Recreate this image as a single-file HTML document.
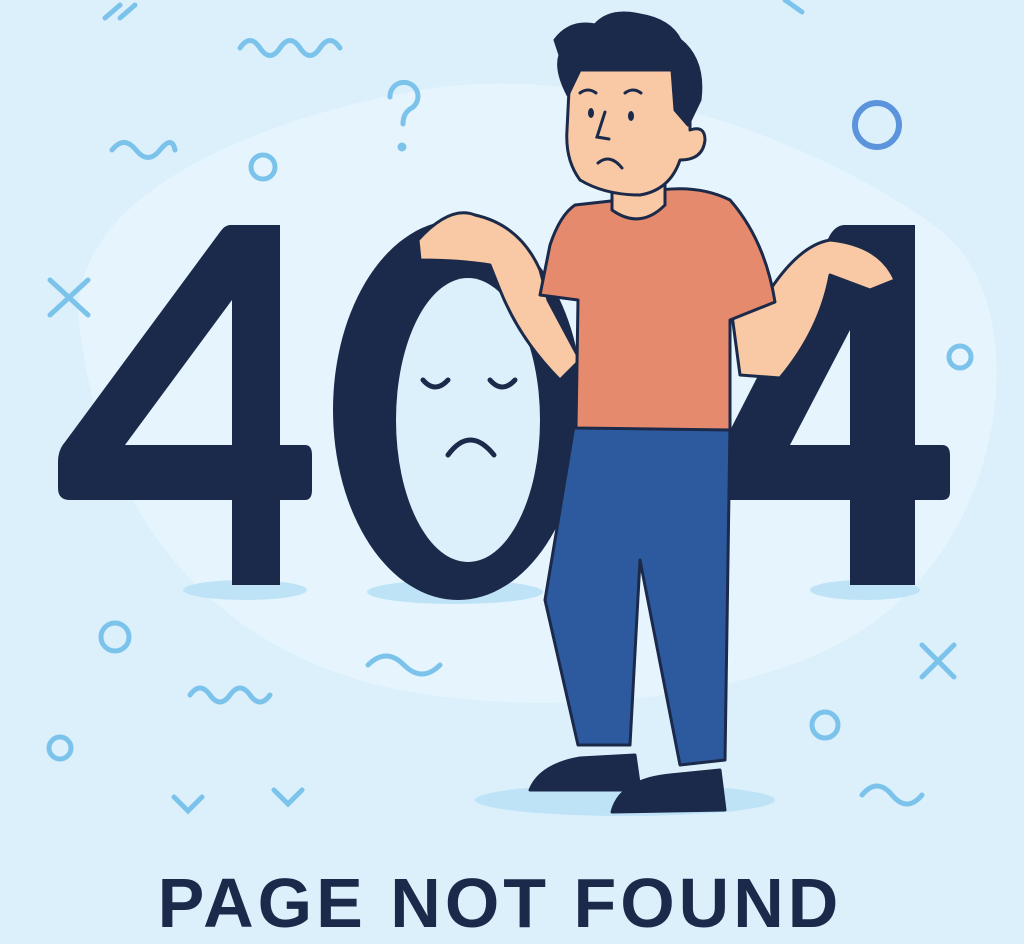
<!DOCTYPE html>
<html><head><meta charset="utf-8"><style>
html,body{margin:0;padding:0;width:1024px;height:944px;overflow:hidden;background:#dcf0fb}
svg{display:block}
</style></head><body>
<svg width="1024" height="944" viewBox="0 0 1024 944" xmlns="http://www.w3.org/2000/svg">
<rect width="1024" height="944" fill="#dcf0fb"/>
<path d="M80 330 C60 200 250 120 420 90 C600 60 820 140 940 230 C1030 300 1010 500 900 600 C800 700 560 720 400 690 C200 650 100 500 80 330Z" fill="#e6f5fd"/>
<g fill="#bfe3f6">
<ellipse cx="245" cy="590" rx="62" ry="10"/>
<ellipse cx="455" cy="592" rx="88" ry="12"/>
<ellipse cx="865" cy="590" rx="55" ry="10"/>
<ellipse cx="625" cy="800" rx="150" ry="16"/>
</g>
<g fill="none" stroke="#7cc3ec" stroke-width="5" stroke-linecap="round">
<path d="M105 18 L120 5 M120 18 L135 5"/>
<path d="M240 48 q10 -15 20 0 t20 0 t20 0 t20 0 t20 0"/>
<path d="M112 150 q12 -15 24 0 t24 0 t15 0"/>
<circle cx="263" cy="167" r="12"/>
<path d="M390 97 a14 14 0 1 1 20 12 q-7 5 -7 15"/><circle cx="402" cy="147" r="2" fill="#7cc3ec"/>
<path d="M50 280 L88 315 M88 280 L50 315"/>
<circle cx="960" cy="357" r="11"/>
<circle cx="115" cy="637" r="14"/>
<path d="M368 665 q18 -18 36 0 t36 0"/>
<path d="M190 695 q10 -14 20 0 t20 0 t20 0 t20 0"/>
<circle cx="60" cy="748" r="11"/>
<path d="M174 797 l14 14 l14 -14 M274 790 l14 14 l14 -14"/>
<path d="M922 645 L954 677 M954 645 L922 677"/>
<circle cx="825" cy="725" r="13"/>
<path d="M862 795 q15 -18 30 0 t30 0"/>
<path d="M785 0 L802 12"/>
</g>
<circle cx="877" cy="125" r="22" fill="none" stroke="#5b93dc" stroke-width="6"/>
<g fill="#1b2a4a">
<path d="M230 225 L280 225 L280 445 L305 445 Q312 445 312 455 L312 490 Q312 500 305 500 L280 500 L280 585 L232 585 L232 500 L70 500 Q58 500 58 488 L58 462 Q58 450 65 442 L220 232 Q225 225 230 225Z M232 445 L232 300 L125 445Z"/>
<ellipse cx="458" cy="410" rx="125" ry="190"/>
<path d="M845 225 L915 225 L915 445 L942 445 Q950 445 950 455 L950 492 Q950 500 942 500 L915 500 L915 585 L850 585 L850 500 L720 500 L720 450 L830 235 Q836 225 845 225Z M850 445 L850 330 L790 445Z"/>
</g>
<ellipse cx="468" cy="420" rx="72" ry="142" fill="#dcf0fb"/>
<g fill="none" stroke="#1b2a4a" stroke-width="5" stroke-linecap="round">
<path d="M423 380 q12 14 25 0 M490 380 q12 14 25 0"/>
<path d="M448 455 q22 -30 46 0"/>
</g>
<g stroke="#1b2a4a" stroke-width="3" stroke-linejoin="round" stroke-linecap="round">
<path d="M575 420 L730 425 L725 760 L680 765 L640 560 L630 745 L578 745 L545 600 Z" fill="#2d5a9e"/>
<path d="M530 790 Q540 765 580 758 L635 755 L640 790 Z M612 812 Q620 780 670 775 L720 770 L725 810 Z" fill="#1b2a4a"/>
<path d="M418 240 Q450 205 475 215 Q520 225 540 270 L548 300 L580 360 L560 380 Q520 340 500 290 L490 265 Q460 260 420 260Z" fill="#f8c9a4"/>
<path d="M730 300 L770 290 Q800 245 830 240 Q880 245 895 280 L870 290 L830 275 Q820 330 780 378 L740 375Z" fill="#f8c9a4"/>
<path d="M575 205 Q560 215 550 245 L540 295 L578 300 L576 428 L730 430 L730 320 L775 302 Q765 240 730 200 Q700 185 660 190 L620 200Z" fill="#e68a6d"/>
<path d="M612 185 L612 210 Q640 230 665 205 L665 180Z" fill="#f8c9a4"/>
<path d="M570 70 Q580 40 630 40 Q680 45 690 90 L690 130 Q705 125 705 140 Q703 160 680 160 Q670 190 640 195 Q605 195 580 180 Q565 160 567 130Z" fill="#f8c9a4"/>
<path d="M555 40 Q570 20 595 25 Q610 8 640 15 Q670 20 680 40 Q705 60 700 100 L688 125 L675 110 L672 70 L580 70 L568 95 Q555 70 560 55Z" fill="#1b2a4a"/>
</g>
<g fill="none" stroke="#1b2a4a" stroke-width="3" stroke-linecap="round">
<path d="M580 93 q8 -6 16 0 M625 93 q8 -6 16 0"/>
<path d="M605 112 l-8 25 l12 2"/>
<path d="M598 163 q12 -10 24 5"/>
</g>
<ellipse cx="591" cy="113" rx="3" ry="5" fill="#1b2a4a"/><ellipse cx="631" cy="116" rx="3" ry="5" fill="#1b2a4a"/>
<text x="500" y="927" text-anchor="middle" font-family="Liberation Sans, sans-serif" font-weight="bold" font-size="70" letter-spacing="4" fill="#1b2a4a">PAGE NOT FOUND</text>
</svg>
</body></html>
